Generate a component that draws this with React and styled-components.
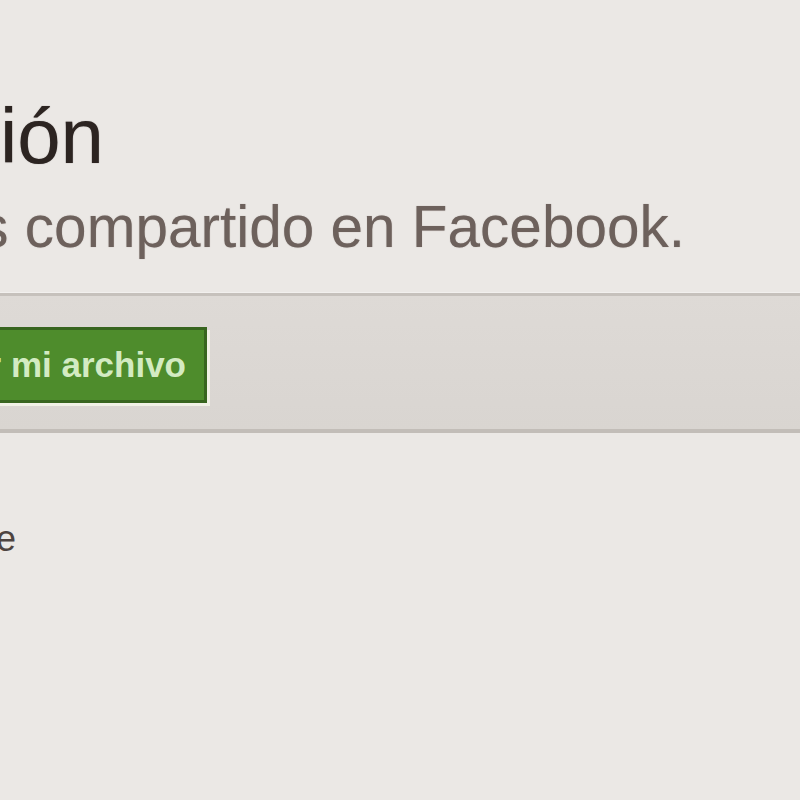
import styled, { createGlobalStyle } from "styled-components";

const GlobalStyle = createGlobalStyle`
  html, body {
    margin: 0;
    padding: 0;
    background: #ebe8e5;
    overflow: hidden;
  }
  body {
    font-family: "Liberation Sans", Arial, sans-serif;
  }
`;

const Page = styled.main`
  width: 800px;
  height: 800px;
  overflow: hidden;
  background: #ebe8e5;
  padding-top: 97px;
  box-sizing: border-box;
`;

// Lines that are cut off at the left edge: the end of the text sits at `end`.
const Clip = styled.div`
  display: flex;
  justify-content: flex-end;
  width: ${({ end }) => end}px;
  white-space: nowrap;
`;

const Title = styled.h1`
  margin: 0;
  font-size: 78px;
  line-height: 1;
  font-weight: normal;
  color: #2c2421;
  text-shadow: 0 0 1px rgba(44, 36, 33, 0.5);
`;

const Lead = styled.p`
  margin: 23px 0 0;
  font-size: 58.5px;
  line-height: 1;
  color: #6d615c;
  text-shadow: 0 0 1px rgba(109, 97, 92, 0.5);
`;

const Toolbar = styled.section`
  margin-top: 36px;
  border-top: 3px solid #c6c1bc;
  border-bottom: 4px solid #c2bdb8;
  background: linear-gradient(#dedad6, #d9d5d1);
  padding: 31px 0 26px;
  box-shadow: 0 -1px 0 #f2f0ee;
`;

const Button = styled.button`
  flex-shrink: 0;
  margin: 0 3px 0 0;
  height: 76px;
  padding: 0 18px;
  border: 3px solid #38651f;
  background: #4e8c2c;
  color: #d3ebc2;
  font-family: "Liberation Sans", Arial, sans-serif;
  font-weight: bold;
  font-size: 35px;
  line-height: 1;
  box-shadow: 3px 3px 0 #f1f1e6;
  cursor: pointer;
`;

const Note = styled.span`
  margin-top: 88px;
  font-size: 36px;
  line-height: 1;
  color: #4e4440;
`;

export default function App() {
  return (
    <>
      <GlobalStyle />
      <Page>
        <Clip end={104}>
          <Title>Descarga tu información</Title>
        </Clip>
        <Clip end={685}>
          <Lead>Aquí tienes una copia de lo que has compartido en Facebook.</Lead>
        </Clip>
        <Toolbar>
          <Clip end={210}>
            <Button>Descargar mi archivo</Button>
          </Clip>
        </Toolbar>
        <Clip end={16}>
          <Note>Descargas disponibles de</Note>
        </Clip>
      </Page>
    </>
  );
}
